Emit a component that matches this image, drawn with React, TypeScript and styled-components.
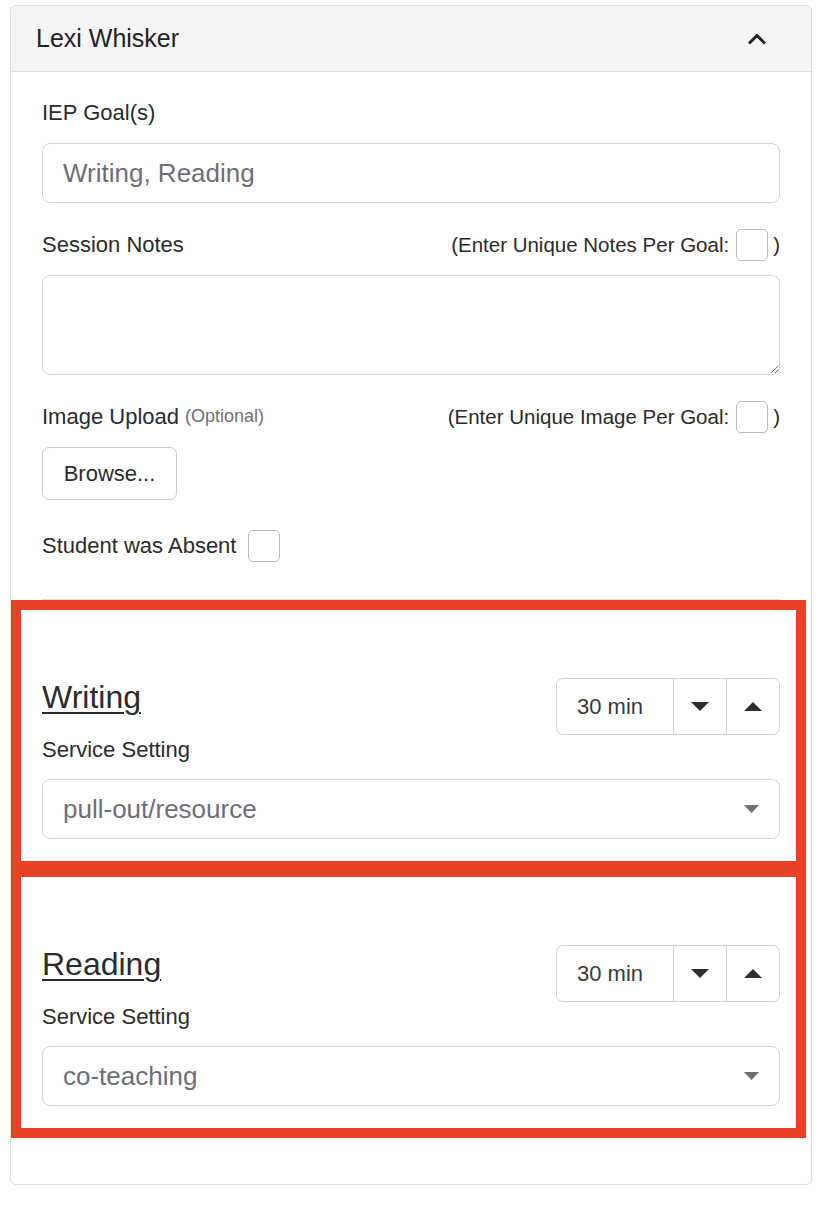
import React from 'react'
import styled, { createGlobalStyle } from 'styled-components'

const GlobalStyle = createGlobalStyle`
  body {
    margin: 0;
    background: #fff;
    font-family: 'Liberation Sans', Arial, Helvetica, sans-serif;
    color: #2b2b2b;
  }
`

const Card = styled.div`
  margin: 5px 0 0 10px;
  width: 800px;
  border: 1px solid #dcdcdc;
  border-radius: 6px;
  background: #fff;
  overflow: hidden;
`

const CardHeader = styled.div`
  height: 65px;
  display: flex;
  align-items: center;
  justify-content: space-between;
  padding: 0 44px 0 25px;
  background: #f4f4f4;
  border-bottom: 1px solid #dcdcdc;
`

const StudentName = styled.span`
  font-size: 25px;
  color: #222;
`

const CardBody = styled.div`
  padding: 24px 31px 0;
`

const FormGroup = styled.div<{ $gap?: number }>`
  margin-bottom: ${({ $gap }) => $gap ?? 25}px;
`

const LabelRow = styled.div`
  display: flex;
  align-items: center;
  justify-content: space-between;
  height: 33px;
  margin-bottom: 14px;
`

const Label = styled.label`
  font-size: 22px;
  color: #2b2b2b;
  display: inline-flex;
  align-items: center;
`

const ServiceLabel = styled(Label)`
  display: block;
  line-height: 33px;
`

const Muted = styled.small`
  font-size: 18px;
  color: #6f6f6f;
  margin-left: 6px;
`

const UniqueToggle = styled.span`
  display: inline-flex;
  align-items: center;
  font-size: 20.5px;
  color: #2b2b2b;
`

const Checkbox = styled.input.attrs({ type: 'checkbox' })<{ $gap?: number }>`
  appearance: none;
  box-sizing: border-box;
  width: 32px;
  height: 32px;
  margin: 0 5px 0 ${({ $gap }) => $gap ?? 7}px;
  border: 1px solid #b9b9c2;
  border-radius: 5px;
  background: #fff;
`

const TextInput = styled.input`
  display: block;
  box-sizing: border-box;
  width: 100%;
  height: 60px;
  padding: 0 20px;
  font-family: inherit;
  font-size: 26px;
  color: #2b2b2b;
  border: 1px solid #d2d2dc;
  border-radius: 8px;
  outline: none;
  &::placeholder {
    color: #6e6e78;
  }
`

const TextArea = styled.textarea`
  display: block;
  box-sizing: border-box;
  width: 100%;
  height: 100px;
  padding: 12px 20px;
  font-family: inherit;
  font-size: 22px;
  border: 1px solid #d2d2dc;
  border-radius: 8px;
  outline: none;
`

const FileButton = styled.button`
  display: block;
  height: 53px;
  width: 135px;
  font-family: inherit;
  font-size: 22px;
  color: #2b2b2b;
  background: #fff;
  border: 1px solid #c9c9cf;
  border-radius: 7px;
`

const AbsentRow = styled.div`
  display: flex;
  align-items: center;
  height: 33px;
`

const Divider = styled.hr`
  margin: 37px 31px 0;
  height: 1px;
  border: 0;
  background: #dcdcdc;
`

const Goals = styled.div`
  padding: 0 5px 46px 0;
`

const GoalBox = styled.section<{ $top: number; $bottom: number }>`
  border: 10px solid #e84126;
  border-top-width: ${({ $top }) => $top}px;
  border-bottom-width: ${({ $bottom }) => $bottom}px;
  padding: 68px 16px 22px 21px;
`

const GoalHead = styled.div`
  display: flex;
  justify-content: space-between;
  align-items: flex-start;
  margin-bottom: 13px;
`

const GoalTitle = styled.h3`
  margin: 0 0 17px;
  font-size: 32px;
  font-weight: 400;
  line-height: 38px;
  color: #2b2b2b;
  text-decoration: underline;
  text-underline-offset: 4px;
  text-decoration-thickness: 2px;
`

const Spinner = styled.div`
  display: flex;
  height: 55px;
  border: 1px solid #cfcfd4;
  border-radius: 7px;
  overflow: hidden;
`

const SpinValue = styled.span`
  width: 96px;
  padding-left: 20px;
  display: flex;
  align-items: center;
  font-size: 22px;
  color: #3a3a3a;
`

const SpinButton = styled.button`
  width: 53px;
  display: flex;
  align-items: center;
  justify-content: center;
  padding: 0;
  background: #fff;
  border: 0;
  border-left: 1px solid #cfcfd4;
`

const Select = styled.div`
  box-sizing: border-box;
  height: 60px;
  display: flex;
  align-items: center;
  justify-content: space-between;
  padding: 0 20px;
  font-size: 26px;
  color: #6e6e78;
  border: 1px solid #d2d2dc;
  border-radius: 8px;
`

const Triangle = ({ up, color = '#2e2e2e', w = 18, h = 9 }: { up?: boolean; color?: string; w?: number; h?: number }) => (
  <svg width={w} height={h} viewBox={`0 0 ${w} ${h}`}>
    <polygon points={up ? `0,${h} ${w / 2},0 ${w},${h}` : `0,0 ${w},0 ${w / 2},${h}`} fill={color} />
  </svg>
)

const Chevron = () => (
  <svg width='20' height='12' viewBox='0 0 20 12'>
    <polyline points='2,10.5 10,2.5 18,10.5' fill='none' stroke='#222' strokeWidth='3' />
  </svg>
)

type Goal = { name: string; setting: string; minutes: number }

const goals: Goal[] = [
  { name: 'Writing', setting: 'pull-out/resource', minutes: 30 },
  { name: 'Reading', setting: 'co-teaching', minutes: 30 },
]

const App = () => {
  return (
    <>
      <GlobalStyle />
      <Card>
        <CardHeader>
          <StudentName>Lexi Whisker</StudentName>
          <Chevron />
        </CardHeader>
        <CardBody>
          <FormGroup>
            <LabelRow>
              <Label>IEP Goal(s)</Label>
            </LabelRow>
            <TextInput placeholder='Writing, Reading' />
          </FormGroup>
          <FormGroup>
            <LabelRow>
              <Label>Session Notes</Label>
              <UniqueToggle>
                (Enter Unique Notes Per Goal:
                <Checkbox />)
              </UniqueToggle>
            </LabelRow>
            <TextArea />
          </FormGroup>
          <FormGroup $gap={29}>
            <LabelRow>
              <Label>
                Image Upload <Muted>(Optional)</Muted>
              </Label>
              <UniqueToggle>
                (Enter Unique Image Per Goal:
                <Checkbox />)
              </UniqueToggle>
            </LabelRow>
            <FileButton>Browse...</FileButton>
          </FormGroup>
          <AbsentRow>
            <Label>Student was Absent</Label>
            <Checkbox $gap={12} />
          </AbsentRow>
        </CardBody>
        <Divider />
        <Goals>
          {goals.map((g, i) => (
            <GoalBox key={g.name} $top={i === 0 ? 10 : 8} $bottom={i === goals.length - 1 ? 10 : 8}>
              <GoalHead>
                <div>
                  <GoalTitle>{g.name}</GoalTitle>
                  <ServiceLabel>Service Setting</ServiceLabel>
                </div>
                <Spinner>
                  <SpinValue>{g.minutes} min</SpinValue>
                  <SpinButton>
                    <Triangle />
                  </SpinButton>
                  <SpinButton>
                    <Triangle up />
                  </SpinButton>
                </Spinner>
              </GoalHead>
              <Select>
                <span>{g.setting}</span>
                <Triangle color='#6e6e78' w={15} h={8} />
              </Select>
            </GoalBox>
          ))}
        </Goals>
      </Card>
    </>
  )
}

export default App
